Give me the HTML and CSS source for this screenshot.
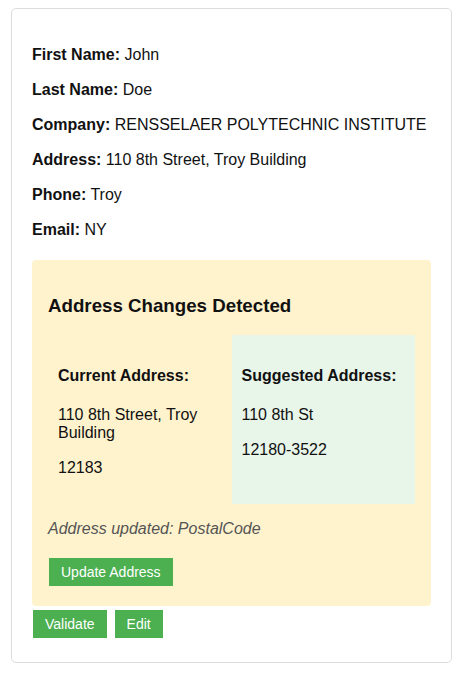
FILE: index.html
```html
<!DOCTYPE html>
<html lang="en">
<head>
<meta charset="utf-8">
<title>Contact</title>
<link rel="stylesheet" href="styles.css">
</head>
<body>
<div class="card">
  <p class="field"><strong>First Name:</strong> John</p>
  <p class="field"><strong>Last Name:</strong> Doe</p>
  <p class="field"><strong>Company:</strong> RENSSELAER POLYTECHNIC INSTITUTE</p>
  <p class="field"><strong>Address:</strong> 110 8th Street, Troy Building</p>
  <p class="field"><strong>Phone:</strong> Troy</p>
  <p class="field"><strong>Email:</strong> NY</p>

  <div class="changes">
    <h3 class="changes-title">Address Changes Detected</h3>
    <div class="compare">
      <div class="col">
        <h4 class="col-title">Current Address:</h4>
        <p class="col-line">110 8th Street, Troy Building</p>
        <p class="col-line">12183</p>
      </div>
      <div class="col col-suggested">
        <h4 class="col-title">Suggested Address:</h4>
        <p class="col-line">110 8th St</p>
        <p class="col-line">12180-3522</p>
      </div>
    </div>
    <p class="note">Address updated: PostalCode</p>
    <div class="actions">
      <button class="btn" type="button">Update Address</button>
    </div>
  </div>

  <div class="actions">
    <button class="btn" type="button">Validate</button>
    <button class="btn" type="button">Edit</button>
  </div>
</div>
</body>
</html>
```

FILE: styles.css
```css
* { box-sizing: border-box; }

body {
  margin: 8px 16px 8px 11px;
  font-family: "Liberation Sans", Arial, sans-serif;
  font-size: 16px;
  color: #111;
  background: #fff;
}

.card {
  border: 1px solid #dcdcdc;
  border-radius: 5px;
  padding: 20px;
  background: #fff;
}

.field {
  margin: 16px 0;
  line-height: 19px;
}

.changes {
  margin-top: 21px;
  background: #fff3cd;
  border-radius: 4px;
  padding: 16px;
}

.changes-title {
  font-size: 18.72px;
  margin: 18.72px 0;
}

.compare {
  display: grid;
  grid-template-columns: 1fr 1fr;
}

.col {
  padding: 10px;
}

.col-suggested {
  background: #e8f5e9;
}

.col-title {
  font-size: 16px;
  margin: 21.28px 0;
}

.col-line {
  margin: 17px 0;
}

.note {
  margin: 16px 0;
  font-style: italic;
  color: #555;
}

.actions {
  display: flex;
  gap: 8px;
  padding-left: 1px;
}

.btn {
  margin: 4px 0;
  padding: 6px 12px;
  border: none;
  border-radius: 0;
  background: #4caf50;
  color: #fff;
  font-family: "Liberation Sans", Arial, sans-serif;
  font-size: 14px;
  line-height: 16px;
  cursor: pointer;
}
```
